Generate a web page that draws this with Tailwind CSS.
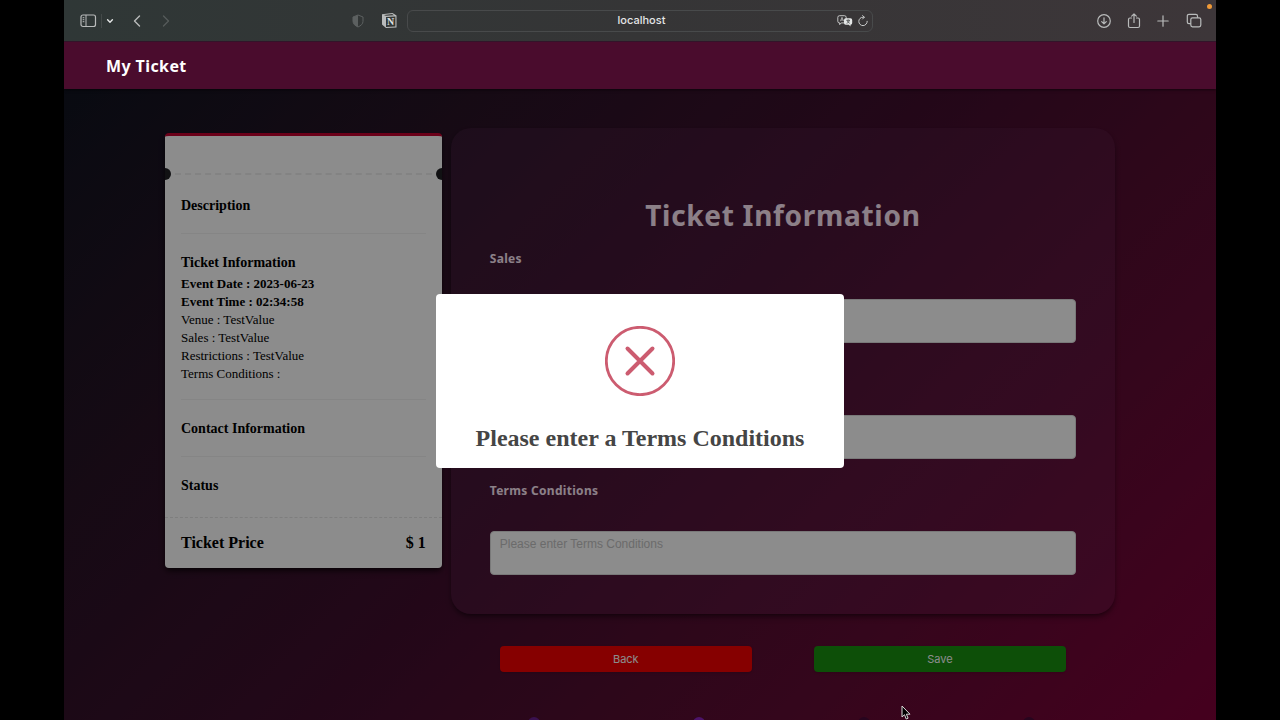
<!DOCTYPE html>
<html lang="en">
<head>
    <meta charset="UTF-8">
    <meta name="viewport" content="width=device-width, initial-scale=1.0">
    <script src="https://cdn.jsdelivr.net/npm/@tailwindcss/browser@4"></script>
    <title>My Ticket</title>
</head>
<body class="bg-black">
    <div class="relative flex flex-col h-screen mx-[5%]">
        <!-- recording indicator -->
        <span class="absolute z-10 top-1 right-1 w-[5px] h-[5px] rounded-full bg-[#f09a37]"></span>

        <!-- browser toolbar -->
        <div class="grid grid-cols-[1fr_466px_1fr] items-center h-[41px] shrink-0 bg-linear-to-r from-[#2f3736] via-[#353536] to-[#3d3639] text-[#b9bbbb]">
            <div class="flex items-center pl-4 pr-[9px]">
                <button aria-label="Sidebar">
                    <svg class="w-[17px] h-[14px]" viewBox="0 0 17 14" fill="none" stroke="currentColor">
                        <rect x="1" y="1" width="14.5" height="11.5" rx="2" stroke-width="1.2"/>
                        <path d="M6 1v11.5M2.700 3.700h1.600M2.700 5.700h1.600M2.700 7.700h1.600"/>
                    </svg>
                </button>
                <span class="w-px h-[14px] ml-1 bg-[#444a49]"></span>
                <button class="ml-1" aria-label="Tab groups">
                    <svg class="w-[8px] h-[8px]" viewBox="0 0 8 8" fill="none" stroke="#e4e6e6" stroke-width="1.4" stroke-linecap="round" stroke-linejoin="round"><path d="M1.6 2.8 4 5.2 6.4 2.8"/></svg>
                </button>
                <button class="ml-4" aria-label="Back">
                    <svg class="w-[14px] h-[14px]" viewBox="0 0 14 14" fill="none" stroke="currentColor" stroke-width="1.4" stroke-linecap="round" stroke-linejoin="round"><path d="M9.5 2 4.5 7l5 5"/></svg>
                </button>
                <button class="ml-4" aria-label="Forward" disabled>
                    <svg class="w-[14px] h-[14px]" viewBox="0 0 14 14" fill="none" stroke="#555b5a" stroke-width="1.4" stroke-linecap="round" stroke-linejoin="round"><path d="m3.5 2 5 5-5 5"/></svg>
                </button>
                <button class="ml-auto" aria-label="Privacy report">
                    <svg class="w-[14px] h-[14px]" viewBox="0 0 14 14"><path d="M7 1 12 3v4.3c0 2.700-2.200 4.400-5 5.700-2.800-1.300-5-3-5-5.700V3z" fill="none" stroke="#5c6060"/><path d="M7 1v12C4.200 11.700 2 10 2 7.300V3z" fill="#5c6060"/></svg>
                </button>
                <button class="ml-4" aria-label="Notion">
                    <svg class="w-[17px] h-[17px]" viewBox="0 0 17 17">
                        <path d="M1 2.200 11.500 1 15.500 3.600V15.400L5 16 1 12.600z" fill="#b9bbbb"/>
                        <path d="M2.800 2.900 11.200 2l1.800 1.200-8 .6z" fill="#343736"/>
                        <path d="M5 5l9.400-.6v10L5 15z" fill="#343736"/>
                        <text x="9.700" y="13" text-anchor="middle" class="font-['Liberation_Serif'] font-bold text-[10px]" fill="#dfe1e1">N</text>
                    </svg>
                </button>
            </div>
            <div class="flex items-center h-[22px] pl-1 pr-[3px] rounded-md border border-[#484a4b] text-[#e4e6e6]">
                <input class="w-full pl-[34px] text-center font-[Inter,sans-serif] font-medium text-[11px] outline-none" aria-label="Address" value="localhost">
                <button aria-label="Translate">
                    <svg class="w-[16px] h-[12px]" viewBox="0 0 16 12">
                        <path d="M2.500 .7h5a1.700 1.700 0 0 1 1.700 1.700v3.800a1.700 1.700 0 0 1-1.700 1.700H4.200L2.700 9.600V7.900A1.700 1.700 0 0 1 .8 6.200V2.400A1.700 1.700 0 0 1 2.500 .7z" fill="none" stroke="currentColor" stroke-width=".8"/>
                        <path d="M3.400 6.200 5 2.300l1.600 3.900M4 5h2" fill="none" stroke="currentColor" stroke-width=".6"/>
                        <path d="M8.700 3.200h4.800A1.700 1.700 0 0 1 15.200 4.900V8a1.700 1.700 0 0 1-1.700 1.700v1.900l-1.700-1.900H8.700A1.700 1.700 0 0 1 7 8V4.900a1.700 1.700 0 0 1 1.700-1.700z" fill="currentColor"/>
                        <path d="M9.400 5.300h3.600M11.200 4.400v.9M12.300 5.400C12 6.700 11 7.800 9.600 8.300M10.100 5.400c.4 1.300 1.300 2.300 2.700 2.900" fill="none" stroke="#343536" stroke-width=".7"/>
                    </svg>
                </button>
                <button class="ml-1" aria-label="Reload">
                    <svg class="w-[12px] h-[12px]" viewBox="0 0 12 12" fill="none" stroke="#c8caca" stroke-linecap="round" stroke-linejoin="round"><path d="M10.200 6.300A4.200 4.200 0 1 1 6 2.200h1.200M5.600 .6 7.300 2.200 5.600 4"/></svg>
                </button>
            </div>
            <div class="flex items-center justify-end gap-[14px] pr-[14px]">
                <button aria-label="Downloads">
                    <svg class="w-4 h-4" viewBox="0 0 16 16" fill="none" stroke="currentColor" stroke-width="1.2" stroke-linecap="round" stroke-linejoin="round"><circle cx="8" cy="8" r="6.3"/><path d="M8 4.800v6M5.700 8.600 8 10.900l2.300-2.300"/></svg>
                </button>
                <button aria-label="Share">
                    <svg class="w-4 h-4" viewBox="0 0 16 16" fill="none" stroke="currentColor" stroke-width="1.2" stroke-linecap="round" stroke-linejoin="round"><path d="M5.500 5H4a1.500 1.500 0 0 0-1.500 1.500v6.500A1.500 1.500 0 0 0 4 14.500h8a1.500 1.500 0 0 0 1.500-1.500V6.500A1.500 1.500 0 0 0 12 5h-1.500M8 9.500V.9M5.700 3.100 8 .8l2.300 2.300"/></svg>
                </button>
                <button aria-label="New tab">
                    <svg class="w-[14px] h-[14px]" viewBox="0 0 14 14" fill="none" stroke="currentColor" stroke-width="1.2" stroke-linecap="round"><path d="M7 1.800v10.400M1.800 7h10.400"/></svg>
                </button>
                <button class="ml-[2px]" aria-label="Tabs">
                    <svg class="w-4 h-4" viewBox="0 0 16 16" fill="none" stroke="currentColor" stroke-width="1.2" stroke-linejoin="round"><rect x="4.800" y="4.800" width="10" height="9" rx="1.700"/><path d="M4.800 10.700H3A1.700 1.700 0 0 1 1.300 9V3A1.700 1.700 0 0 1 3 1.300h6.800A1.700 1.700 0 0 1 11.500 3v1.800"/></svg>
                </button>
            </div>
        </div>

        <!-- page -->
        <div class="relative flex flex-col grow overflow-hidden bg-linear-135 from-[#0d131f] via-[#400e2d] to-[#7e0038]">
            <header class="relative z-20 flex items-center h-12 shrink-0 px-[42px] bg-[#4a0c2d] border-t border-[#33142a] shadow-sm shadow-black/40">
                <h2 class="font-['Noto_Sans',sans-serif] font-bold text-base text-white tracking-wide">My Ticket</h2>
            </header>

            <main class="grid grid-cols-[5fr_12fr] items-start gap-x-[9px] px-[101px] pt-[39px]">
                <!-- ticket -->
                <section class="mt-[5px] bg-white rounded-sm border-t-[3px] border-[#c3002f] text-black font-['Liberation_Serif',serif] shadow-md shadow-black/60">
                    <div class="relative h-[39px] border-b-2 border-dashed border-[#eeeeee]">
                        <span class="absolute -bottom-[7px] left-0 w-[6px] h-3 rounded-r-full bg-[#202024]"></span>
                        <span class="absolute -bottom-[7px] right-0 w-[6px] h-3 rounded-l-full bg-[#202024]"></span>
                    </div>
                    <div class="px-4">
                        <div class="h-[59px] pt-[21px] border-b border-[#f2f2f2]">
                            <h3 class="font-bold text-sm">Description</h3>
                        </div>
                        <div class="h-[166px] pt-[19px] border-b border-[#f2f2f2] text-[13px] leading-[18px]">
                            <h3 class="mb-[2px] font-bold text-sm">Ticket Information</h3>
                            <p class="font-bold">Event Date : 2023-06-23</p>
                            <p class="font-bold">Event Time : 02:34:58</p>
                            <p>Venue : TestValue</p>
                            <p>Sales : TestValue</p>
                            <p>Restrictions : TestValue</p>
                            <p>Terms Conditions :</p>
                        </div>
                        <div class="h-[57px] pt-[19px] border-b border-[#f2f2f2]">
                            <h3 class="font-bold text-sm">Contact Information</h3>
                        </div>
                        <div class="h-[60px] pt-[19px]">
                            <h3 class="font-bold text-sm">Status</h3>
                        </div>
                    </div>
                    <div class="flex items-center justify-between h-[51px] px-4 border-t border-dashed border-[#e6e6e6] font-bold text-base">
                        <span>Ticket Price</span>
                        <span>$ 1</span>
                    </div>
                </section>

                <!-- form -->
                <form>
                    <div class="h-[486px] px-[39px] pt-[65px] rounded-[20px] bg-[#6e3264]/20 shadow-md shadow-black/40 font-['Noto_Sans',sans-serif] text-[#ffeaf8]">
                        <h1 class="h-[46px] text-center font-bold text-[28px] leading-[44px] tracking-wide">Ticket Information</h1>
                        <label for="sales" class="block h-[60px] pt-3 font-bold text-xs tracking-wide">Sales</label>
                        <textarea id="sales" class="block w-full h-11 px-[9px] py-1 rounded-sm bg-white border border-[#dddddd] resize-none text-black font-['Liberation_Sans',sans-serif] text-xs"></textarea>
                        <label for="restrictions" class="block h-[72px] pt-6 font-bold text-xs tracking-wide">Restrictions</label>
                        <textarea id="restrictions" class="block w-full h-11 px-[9px] py-1 rounded-sm bg-white border border-[#dddddd] resize-none text-black font-['Liberation_Sans',sans-serif] text-xs"></textarea>
                        <label for="terms" class="block h-[72px] pt-6 font-bold text-xs tracking-wide">Terms Conditions</label>
                        <textarea id="terms" placeholder="Please enter Terms Conditions" class="block w-full h-11 px-[9px] py-1 rounded-sm bg-white border border-[#dddddd] resize-none text-black placeholder:text-[#c4c4c4] font-['Liberation_Sans',sans-serif] text-xs"></textarea>
                    </div>
                    <div class="grid grid-cols-2 gap-[62px] px-[49px] mt-8 font-[Inter,sans-serif] text-[11px] text-white">
                        <button type="button" class="h-[26px] rounded-sm bg-[#f40000] shadow-sm">Back</button>
                        <button type="button" class="h-[26px] rounded-sm bg-[#189010] shadow-sm">Save</button>
                    </div>
                    <div class="flex gap-[153px] mt-[45px] ml-[77px]">
                        <span class="w-3 h-3 rounded-full bg-[#6a1f90]"></span>
                        <span class="w-3 h-3 rounded-full bg-[#8a24c0]"></span>
                        <span class="w-3 h-3 rounded-full bg-[#480a38]"></span>
                        <span class="w-3 h-3 rounded-full bg-[#480a38]"></span>
                    </div>
                </form>
            </main>

            <!-- alert -->
            <div class="absolute inset-0 z-10 flex items-center justify-center bg-black/45">
                <div role="alertdialog" aria-labelledby="alert-title" class="flex flex-col items-center px-10 pt-8 pb-[14px] rounded-sm bg-white">
                    <svg class="w-[70px] h-[70px]" viewBox="0 0 70 70" fill="none" stroke="#cc5c70" stroke-linecap="round">
                        <circle cx="35" cy="35" r="33.7" stroke-width="2.8"/>
                        <path d="M22.500 22.500l25 25M47.500 22.500l-25 25" stroke-width="4"/>
                    </svg>
                    <h2 id="alert-title" class="mt-[26px] font-['Liberation_Serif',serif] font-bold text-2xl text-[#454545]">Please enter a Terms Conditions</h2>
                </div>
            </div>

            <!-- pointer -->
            <svg class="absolute z-30 right-[305px] bottom-0 w-[10px] h-[15px]" viewBox="0 0 10 15"><path d="M1 1v11l2.500-2.300L5.200 14l1.900-.8L5.400 9.200H9z" fill="#000" stroke="#d8d8d8" stroke-linejoin="round"/></svg>
        </div>
    </div>
</body>
</html>
